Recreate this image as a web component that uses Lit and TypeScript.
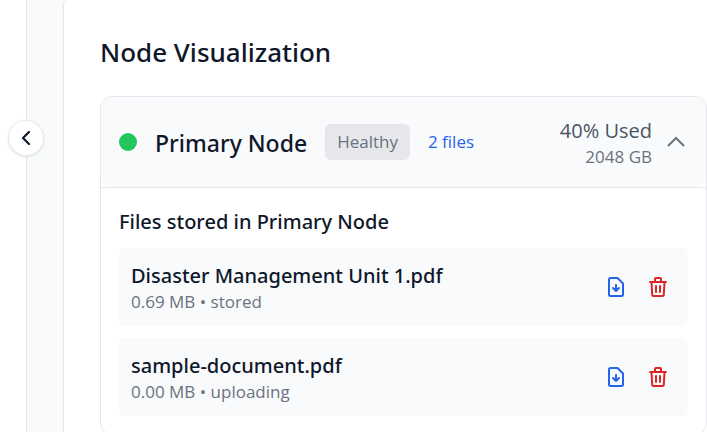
import { LitElement, html, css } from "lit";
import { customElement, property, state } from "lit/decorators.js";

interface StoredFile {
  name: string;
  size: string;
  status: string;
}

@customElement("file-row")
class FileRow extends LitElement {
  @property({ attribute: false }) file!: StoredFile;

  static styles = css`
    :host {
      display: flex;
      align-items: center;
      justify-content: space-between;
      box-sizing: border-box;
      padding: 14px 12px 12px;
      border-radius: 6px;
      background: #f9fafb;
    }
    .name {
      margin: 0;
      font-family: "Segoe UI", "Noto Sans", sans-serif;
      font-size: 20px;
      line-height: 28px;
      font-weight: 500;
      color: #0f172a;
    }
    .meta {
      margin: 0;
      font-size: 17px;
      line-height: 24px;
      color: #6b7280;
    }
    .actions {
      display: flex;
      gap: 6px;
      margin-bottom: 2px;
    }
    button {
      display: flex;
      padding: 6px;
      border: 0;
      background: none;
      cursor: pointer;
    }
    svg {
      width: 24px;
      height: 24px;
      fill: none;
      stroke: currentColor;
      stroke-width: 2;
      stroke-linecap: round;
      stroke-linejoin: round;
    }
    .download {
      color: #2563eb;
    }
    .remove {
      color: #dc2626;
    }
  `;

  render() {
    return html`
      <div>
        <p class="name">${this.file.name}</p>
        <p class="meta">${this.file.size} • ${this.file.status}</p>
      </div>
      <div class="actions">
        <button class="download" type="button" aria-label="Download ${this.file.name}">
          <svg viewBox="0 0 24 24">
            <path d="M6.500 3H13.500L19 8.500V19.500A1.500 1.500 0 0 1 17.500 21H6.500A1.500 1.500 0 0 1 5 19.500V4.500A1.500 1.500 0 0 1 6.500 3Z" />
            <path d="M12 10V16M9 13L12 16L15 13" />
          </svg>
        </button>
        <button class="remove" type="button" aria-label="Delete ${this.file.name}">
          <svg viewBox="0 0 24 24">
            <path d="M4 7H20M9 6.500V4A1 1 0 0 1 10 3H14A1 1 0 0 1 15 4V6.500" />
            <path d="M5.500 7.500L6.200 19.500A1.500 1.500 0 0 0 7.700 21H16.300A1.500 1.500 0 0 0 17.800 19.500L18.500 7.500" />
            <path d="M10 11V17M14 11V17" />
          </svg>
        </button>
      </div>
    `;
  }
}

@customElement("node-card")
class NodeCard extends LitElement {
  @property() name = "";
  @property() health = "";
  @property() used = "";
  @property() capacity = "";
  @property({ attribute: false }) files: StoredFile[] = [];
  @state() private open = true;

  static styles = css`
    :host {
      display: block;
      border: 1px solid #e5e7eb;
      border-radius: 12px;
      background: #fff;
    }
    .header {
      display: flex;
      align-items: center;
      min-height: 54px;
      padding: 18px;
      border-radius: 12px;
      background: #f9fafb;
    }
    .dot {
      width: 18px;
      height: 18px;
      margin-right: 18px;
      border-radius: 50%;
      background: #22c55e;
    }
    h3 {
      margin: 0;
      padding-top: 2px;
      font-family: "Segoe UI", "Noto Sans", sans-serif;
      font-size: 23px;
      line-height: 32px;
      font-weight: 500;
      color: #0f172a;
    }
    .badge {
      margin: 0 18px;
      padding: 6px 12px;
      border-radius: 6px;
      background: #e5e7eb;
      font-size: 17px;
      line-height: 24px;
      color: #6b7280;
    }
    .count {
      font-size: 17px;
      line-height: 24px;
      color: #2563eb;
    }
    .usage {
      margin-left: auto;
      margin-right: 12px;
      padding-top: 2px;
      text-align: right;
    }
    .used {
      font-size: 20px;
      line-height: 28px;
      color: #4b5563;
    }
    .capacity {
      font-size: 17px;
      line-height: 24px;
      color: #6b7280;
    }
    .toggle {
      display: flex;
      padding: 0;
      border: 0;
      background: none;
      color: #6b7280;
      cursor: pointer;
    }
    .toggle svg {
      width: 24px;
      height: 24px;
      fill: none;
      stroke: currentColor;
      stroke-width: 2;
    }
    .body {
      padding: 20px 18px 18px;
      border-top: 1px solid #e5e7eb;
    }
    h4 {
      margin: 0 0 12px;
      font-family: "Segoe UI", "Noto Sans", sans-serif;
      font-size: 20px;
      line-height: 28px;
      font-weight: 500;
      color: #0f172a;
    }
    .files {
      display: flex;
      flex-direction: column;
      gap: 12px;
    }
  `;

  render() {
    return html`
      <div class="header">
        <span class="dot"></span>
        <h3>${this.name}</h3>
        <span class="badge">${this.health}</span>
        <span class="count">${this.files.length} files</span>
        <div class="usage">
          <div class="used">${this.used} Used</div>
          <div class="capacity">${this.capacity}</div>
        </div>
        <button
          class="toggle"
          type="button"
          aria-label="Toggle files"
          aria-expanded=${this.open}
          @click=${() => (this.open = !this.open)}
        >
          <svg viewBox="0 0 24 24">
            <path d=${this.open ? "M4 16L12 8L20 16" : "M4 8L12 16L20 8"} />
          </svg>
        </button>
      </div>
      ${this.open
        ? html`<div class="body">
            <h4>Files stored in ${this.name}</h4>
            <div class="files">
              ${this.files.map((file) => html`<file-row .file=${file}></file-row>`)}
            </div>
          </div>`
        : ""}
    `;
  }
}

@customElement("app-root")
class AppRoot extends LitElement {
  private files: StoredFile[] = [
    { name: "Disaster Management Unit 1.pdf", size: "0.69 MB", status: "stored" },
    { name: "sample-document.pdf", size: "0.00 MB", status: "uploading" },
  ];

  static styles = css`
    :host {
      display: flex;
      height: 100vh;
      overflow: hidden;
      background: #f9fbfa;
      font-family: "Segoe UI", "Open Sans", "Noto Sans", sans-serif;
    }
    .sidebar {
      position: relative;
      flex: none;
      width: 26px;
      border-right: 1px solid #e2e8f0;
      background: #fff;
    }
    .collapse {
      position: absolute;
      top: 120px;
      right: -18px;
      display: flex;
      align-items: center;
      justify-content: center;
      width: 36px;
      height: 36px;
      padding: 0;
      border: 1px solid #e2e8f0;
      border-radius: 50%;
      background: #fff;
      box-shadow: 0 1px 3px rgba(0, 0, 0, 0.1);
      color: #0f172a;
      cursor: pointer;
    }
    .collapse svg {
      width: 24px;
      height: 24px;
      fill: none;
      stroke: currentColor;
      stroke-width: 2.2;
      stroke-linecap: round;
      stroke-linejoin: round;
    }
    main {
      flex: 1;
      min-width: 0;
      margin-left: 36px;
      padding: 34px 0 36px 36px;
      border-left: 1px solid #e5e7eb;
      border-top-left-radius: 6px;
      background: #fff;
      box-shadow: 0 0 2px rgba(0, 0, 0, 0.06);
    }
    h2 {
      margin: 0 0 26px;
      font-family: "Segoe UI", "Noto Sans", sans-serif;
      font-size: 26px;
      line-height: 36px;
      font-weight: 500;
      color: #0f172a;
    }
  `;

  render() {
    return html`
      <aside class="sidebar">
        <button class="collapse" type="button" aria-label="Collapse sidebar">
          <svg viewBox="0 0 24 24"><path d="M15 6L9 12L15 18" /></svg>
        </button>
      </aside>
      <main>
        <h2>Node Visualization</h2>
        <node-card
          name="Primary Node"
          health="Healthy"
          used="40%"
          capacity="2048 GB"
          .files=${this.files}
        ></node-card>
      </main>
    `;
  }
}
